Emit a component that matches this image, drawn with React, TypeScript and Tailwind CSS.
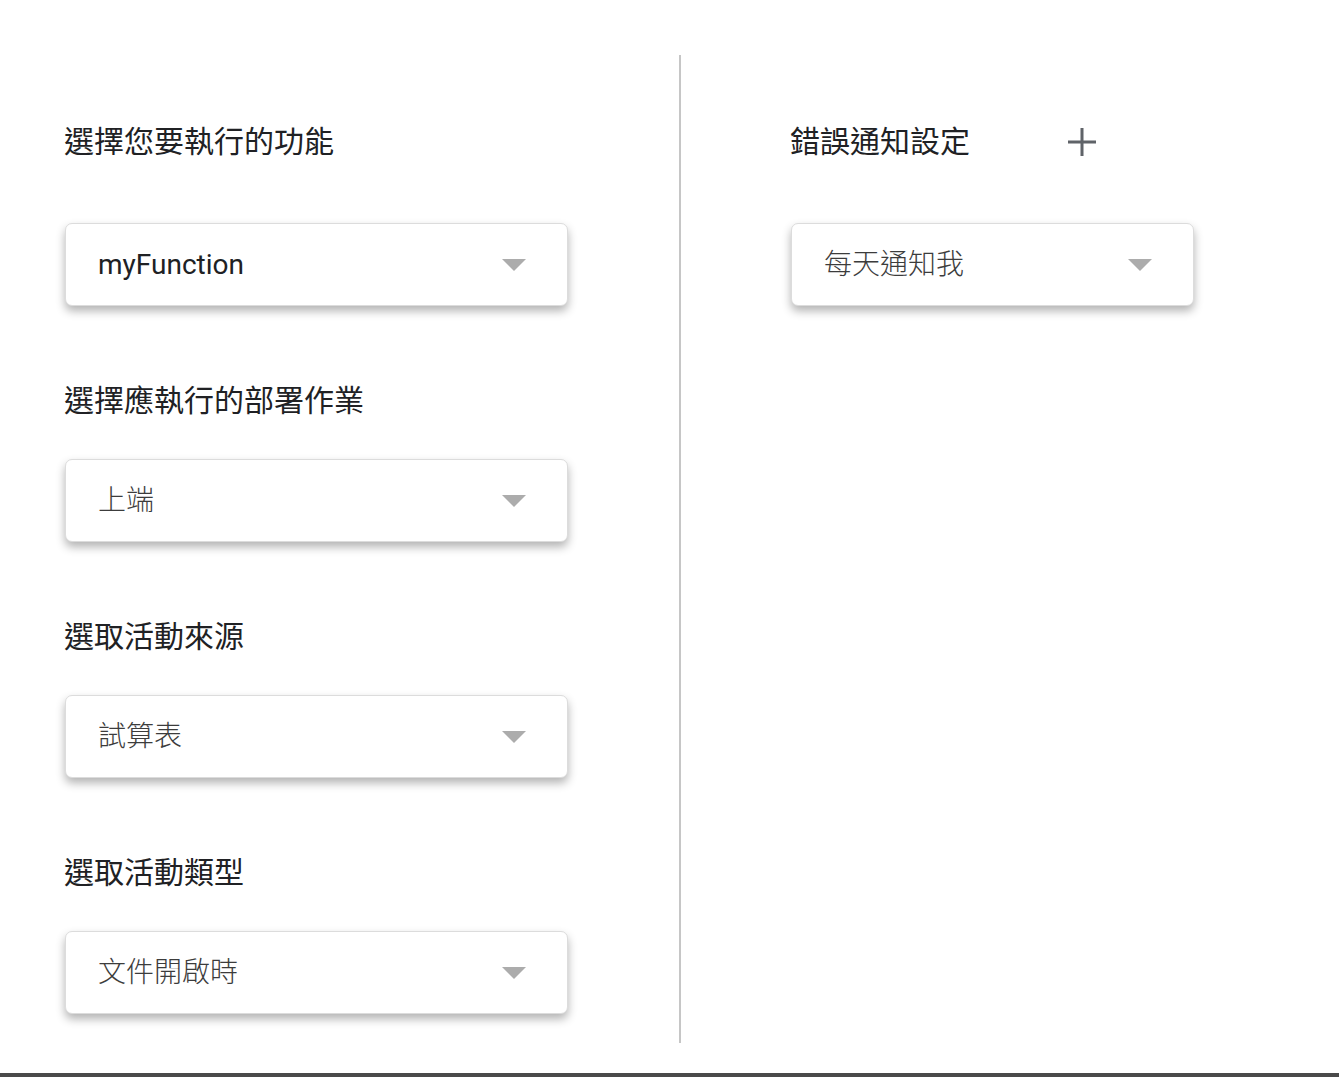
import { ReactNode } from "react";

const cjk = { fontFamily: 'Roboto, "Noto Sans CJK TC", "Noto Sans", sans-serif' };

function Caret() {
  return (
    <svg width="24" height="12" viewBox="0 0 24 12" aria-hidden="true">
      <path d="M0 0 L24 0 L12 12 Z" fill="#acacac" />
    </svg>
  );
}

function Select({ value, width, dark }: { value: string; width: string; dark?: boolean }) {
  return (
    <div
      className={`${width} h-[83px] flex items-center justify-between rounded-[7px] border border-[#dcdcdc] bg-white pl-[32px] pr-[41px] shadow-[0_5px_10px_rgba(0,0,0,0.3)]`}
    >
      <span
        className={`text-[28px] leading-none ${dark ? "text-[#202124]" : "text-[#3c3c3c] font-light"}`}
      >
        {value}
      </span>
      <Caret />
    </div>
  );
}

function Label({ children }: { children: ReactNode }) {
  return <h3 className="text-[30px] leading-[40px] text-[#202124] font-normal">{children}</h3>;
}

export default function App() {
  return (
    <div className="w-full h-[1077px] bg-white flex flex-col overflow-hidden" style={cjk}>
      <div className="flex flex-1 pt-[55px] pb-[30px]">
        <div className="w-[681px] shrink-0 pl-[64px] pt-[67px] border-r-2 border-[#c6c6c6]">
          <Label>選擇您要執行的功能</Label>
          <div className="mt-[61px] pl-[1px]">
            <Select value="myFunction" width="w-[503px]" dark />
          </div>
          <div className="mt-[75px]">
            <Label>選擇應執行的部署作業</Label>
          </div>
          <div className="mt-[38px] pl-[1px]">
            <Select value="上端" width="w-[503px]" />
          </div>
          <div className="mt-[75px]">
            <Label>選取活動來源</Label>
          </div>
          <div className="mt-[38px] pl-[1px]">
            <Select value="試算表" width="w-[503px]" />
          </div>
          <div className="mt-[75px]">
            <Label>選取活動類型</Label>
          </div>
          <div className="mt-[38px] pl-[1px]">
            <Select value="文件開啟時" width="w-[503px]" />
          </div>
        </div>
        <div className="flex-1 pl-[109px] pt-[67px]">
          <div className="flex items-center">
            <Label>錯誤通知設定</Label>
            <svg className="ml-[98px]" width="28" height="28" viewBox="0 0 28 28" aria-hidden="true">
              <path d="M14 0 V28 M0 14 H28" stroke="#5f6368" strokeWidth="3" />
            </svg>
          </div>
          <div className="mt-[61px] pl-[1px]">
            <Select value="每天通知我" width="w-[403px]" />
          </div>
        </div>
      </div>
      <div className="h-[4px] bg-[#4a4a4a]" />
    </div>
  );
}
